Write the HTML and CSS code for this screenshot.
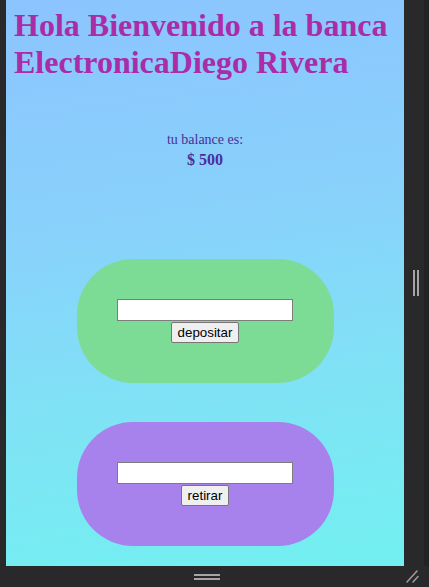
FILE: index.html
```html
<!DOCTYPE html>
<html lang="es">
<head>
<meta charset="utf-8">
<title>Banca Electronica</title>
<link rel="stylesheet" href="styles.css">
</head>
<body>
<div class="frame">
  <div class="spacer"></div>
  <main class="viewport">
    <h1 class="title">Hola Bienvenido a la banca ElectronicaDiego Rivera</h1>
    <section class="balance">
      <div class="label">tu balance es:</div>
      <div class="amount">$ 500</div>
    </section>
    <form class="card card-deposit">
      <input class="field" type="text">
      <button class="btn" type="button">depositar</button>
    </form>
    <form class="card card-withdraw">
      <input class="field" type="text">
      <button class="btn" type="button">retirar</button>
    </form>
  </main>
  <div class="side">
    <div class="side-grip"><span></span><span></span></div>
    <div class="side-edge"></div>
  </div>
  <div class="spacer"></div>
  <div class="bottom">
    <div class="bottom-grip"><span></span><span></span></div>
  </div>
  <div class="corner">
    <svg width="25" height="21" viewBox="0 0 25 21">
      <line x1="3" y1="16" x2="13" y2="5" stroke="#9b9b9b" stroke-width="1.6" stroke-linecap="round"/>
      <line x1="9" y1="16" x2="14" y2="10.5" stroke="#9b9b9b" stroke-width="1.6" stroke-linecap="round"/>
    </svg>
  </div>
</div>
</body>
</html>
```

FILE: styles.css
```css
html, body {
  margin: 0;
  padding: 0;
  background: #29292c;
}

.frame {
  display: grid;
  grid-template-columns: 6px 398px 25px;
  grid-template-rows: 566px 21px;
  width: 429px;
  height: 587px;
  overflow: hidden;
}

.viewport {
  background: linear-gradient(172deg, #8cc4fe 0%, #88d2fb 40%, #7fe3f5 70%, #72f0f0 100%);
  padding: 7px 8px 0;
  display: flex;
  flex-direction: column;
  overflow: hidden;
  font-family: "Liberation Serif", "Times New Roman", serif;
}

.title {
  margin: 0;
  font-size: 32px;
  font-weight: bold;
  line-height: 36.8px;
  color: #aa2ca8;
}

.balance {
  margin-top: 51px;
  text-align: center;
  color: #4a2f98;
}

.label {
  font-size: 14px;
  line-height: 16px;
}

.amount {
  margin-top: 3px;
  font-size: 16px;
  font-weight: bold;
  line-height: 18px;
}

.card {
  margin: 90px auto 0;
  width: 257px;
  box-sizing: border-box;
  padding: 40px 0;
  border-radius: 56px;
  display: flex;
  flex-direction: column;
  align-items: center;
  gap: 1px;
}

.card-deposit {
  background: #7cdc95;
}

.card-withdraw {
  margin-top: 39px;
  background: #a882ec;
}

.field {
  width: 176px;
  height: 22px;
  box-sizing: border-box;
  margin: 0;
  border: 1px solid #7d7d7d;
  background: #fff;
  padding: 1px 2px;
}

.btn {
  height: 21px;
  box-sizing: border-box;
  margin: 0;
  padding: 0 6px;
  font-family: "Liberation Sans", Arial, sans-serif;
  font-size: 13.33px;
  color: #000;
  background: #efefef;
  border: 1px solid #767676;
  border-radius: 2px;
}

.side {
  display: flex;
}

.side-grip {
  width: 20px;
  display: flex;
  align-items: center;
  justify-content: center;
  gap: 2px;
  padding-left: 4px;
  box-sizing: border-box;
}

.side-grip span {
  width: 2px;
  height: 26px;
  background: #a5a5a5;
}

.side-edge {
  width: 5px;
  background: #222225;
}

.bottom {
  display: flex;
  justify-content: center;
}

.bottom-grip {
  display: flex;
  flex-direction: column;
  gap: 2px;
  padding-top: 8px;
  margin-left: 3px;
}

.bottom-grip span {
  width: 26px;
  height: 2px;
  background: #a5a5a5;
}

.corner {
  display: flex;
}
```
